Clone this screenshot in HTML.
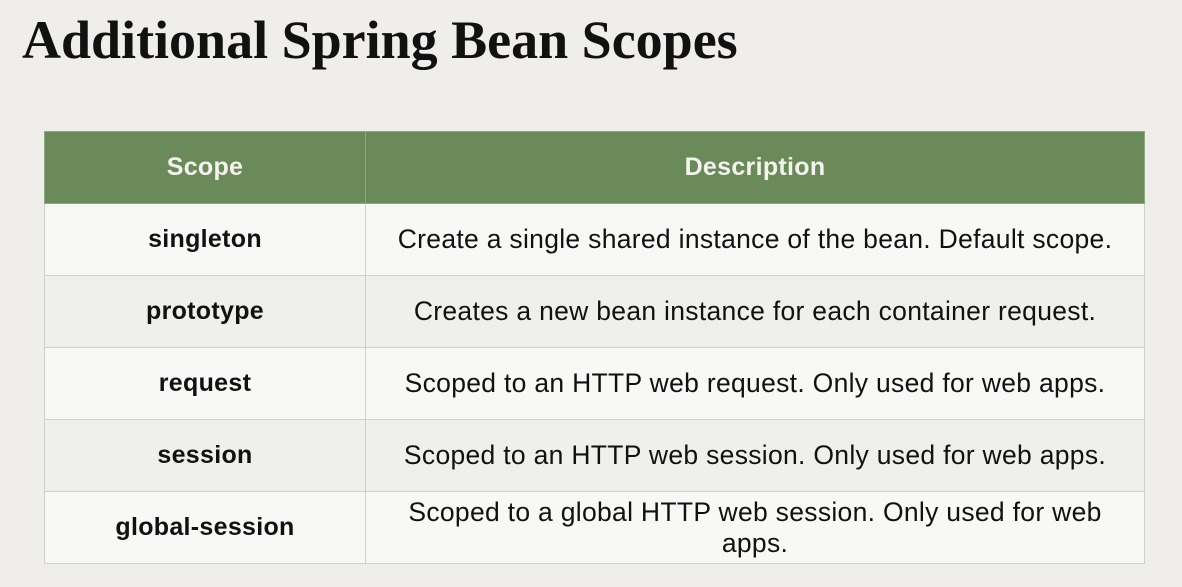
<!DOCTYPE html>
<html><head><style>
html,body{margin:0;padding:0}
body{width:1182px;height:587px;background:#efeeea;position:relative;overflow:hidden;font-family:"Liberation Sans",sans-serif}
h1{position:absolute;left:22px;top:9px;margin:0;font-family:"Liberation Serif",serif;font-weight:bold;font-size:54px;color:#111;white-space:nowrap}
table{position:absolute;left:44px;top:131px;width:1100px;border-collapse:collapse;table-layout:fixed}
td,th{border:1px solid #cfcfcb;text-align:center;font-size:26.5px;letter-spacing:0.3px;color:#111;padding:0 4px}
th{background:#6b8a5a;color:#f4f4ee;height:71px;font-weight:bold;border-color:#8fa784;font-size:25px}
td{height:71px}
td:first-child{font-weight:bold;font-size:25px}
tr:nth-child(even) td{background:#f8f8f6}
tr:nth-child(odd) td{background:#efefec}
</style></head><body>
<h1>Additional Spring Bean Scopes</h1>
<table>
<colgroup><col style="width:321px"><col style="width:779px"></colgroup>
<tr><th>Scope</th><th>Description</th></tr>
<tr><td>singleton</td><td>Create a single shared instance of the bean. Default scope.</td></tr>
<tr><td>prototype</td><td>Creates a new bean instance for each container request.</td></tr>
<tr><td>request</td><td>Scoped to an HTTP web request. Only used for web apps.</td></tr>
<tr><td>session</td><td>Scoped to an HTTP web session. Only used for web apps.</td></tr>
<tr><td>global-session</td><td style="line-height:31px">Scoped to a global HTTP web session. Only used for web<br>apps.</td></tr>
</table>
</body></html>
